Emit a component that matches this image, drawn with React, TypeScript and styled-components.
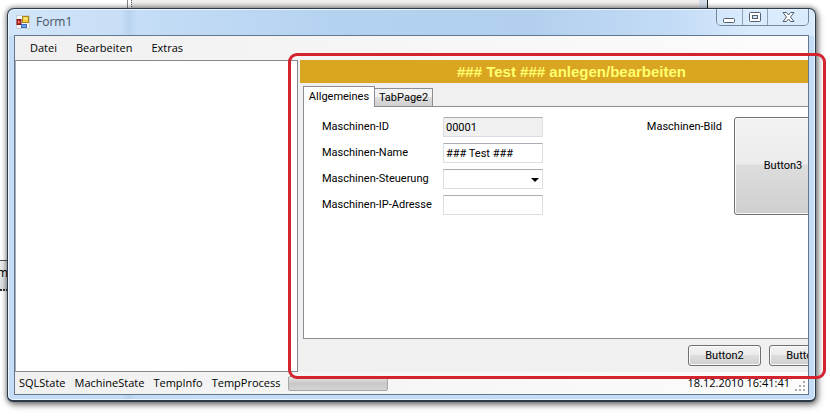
import React, { useState } from "react";
import styled, { createGlobalStyle } from "styled-components";

const shellFont = `"Open Sans", "Noto Sans", sans-serif`;
const formFont = `Roboto, "Liberation Sans", Arial, sans-serif`;

const GlobalStyle = createGlobalStyle`
  *, *::before, *::after { box-sizing: border-box; }
  body { margin: 0; background: #fff; color: #000; overflow: hidden; }
  button, input, select { margin: 0; font: inherit; color: inherit; }
`;

const Desktop = styled.div`
  position: relative;
  display: flex;
  min-height: 100vh;
  padding: 8px 14px 15px 7px;
`;

const BackWindow = styled.div`
  position: absolute;
  top: 0;
  left: 131px;
  right: 125px;
  height: 9px;
  background: linear-gradient(#f4f2f1, #dddbd9);
  border-left: 1px dotted #555;
  border-right: 1px dotted #555;
  box-shadow: -3px 0 0 #fff, -4px 0 0 #888;
`;

const BackEdge = styled.div`
  position: absolute;
  top: 0;
  right: 122px;
  width: 9px;
  height: 9px;
  background: #d4dee8;
  border-right: 1px solid #222;
`;

const BackLabel = styled.div`
  position: absolute;
  top: 260px;
  left: 0;
  width: 8px;
  height: 31px;
  overflow: hidden;
  border-top: 1px solid #555;
  border-bottom: 2px dotted #333;
  background: linear-gradient(#eee, #d9dde0);
  font: 12px/24px ${shellFont};
  text-indent: -3px;
`;

const Window = styled.main`
  position: relative;
  flex: 1;
  min-width: 0;
  display: flex;
  flex-direction: column;
  padding: 0 6px 5px 6px;
  border: 1px solid #2c3a4a;
  border-bottom-width: 2px;
  border-radius: 7px 7px 6px 6px;
  background:
    linear-gradient(90deg, transparent 0 113px, #9fbfe055 121px, transparent 129px),
    linear-gradient(90deg, #d3e6f9 0, #c2dbf5 20%, #b3d2f0 42%, #b2d0ee 65%, #c4dcf6 83%, #d8eafc 92%) top / 100% 27px no-repeat,
    #c4dcf5;
  box-shadow:
    inset 0 0 0 1px #eaf5ff,
    0 0 5px 1px #0006,
    2px 3px 7px 0 #0006;
`;

const TitleBar = styled.header`
  display: flex;
  align-items: center;
  height: 26px;
  padding-left: 2px;
  font: 12px/18px ${shellFont};
  color: #46525f;
`;

const Title = styled.h1`
  margin: 0 auto 0 6px;
  font: inherit;
`;

const Controls = styled.div`
  display: flex;
  align-self: flex-start;
  height: 17px;
  border: 1px solid #75879a;
  border-top: 0;
  border-radius: 0 0 5px 5px;
`;

const ControlButton = styled.button<{ $wide?: boolean }>`
  display: grid;
  place-items: center;
  width: ${(p) => (p.$wide ? 41 : 25)}px;
  padding: 0;
  border: 0;
  background: #e2f0ff44;
  & + & { border-left: 1px solid #8fa3b8; }
`;

const Client = styled.div`
  flex: 1;
  min-height: 0;
  display: flex;
  flex-direction: column;
  border: 1px solid #65778c;
  background: #f0f0f0;
  overflow: hidden;
`;

const MenuBar = styled.nav`
  display: flex;
  height: 24px;
  padding-left: 9px;
  background: linear-gradient(90deg, #f0f0f0, #fcfcfc);
  font: 11px/24px ${shellFont};
`;

const MenuItem = styled.button`
  padding: 0 6px;
  margin-right: 7px;
  border: 0;
  background: none;
`;

const Split = styled.div`
  flex: 1;
  min-height: 0;
  display: grid;
  grid-template-columns: 283px minmax(0, 1fr);
  gap: 2px;
`;

const ListPane = styled.section`
  border: 1px solid #828790;
  border-left-color: #a5adb8;
  background: #fff;
`;

const Editor = styled.section`
  display: flex;
  flex-direction: column;
  width: calc(100% + 35px);
  font: 11px/16px ${formFont};
`;

const Banner = styled.h2`
  height: 23px;
  margin: 0 0 3px;
  background: #daa520;
  color: #ffff70;
  font: bold 15px/23px "Liberation Sans", Arial, sans-serif;
  text-align: center;
`;

const TabStrip = styled.div`
  display: flex;
  height: 20px;
  margin: 0 3px;
`;

const Tab = styled.button<{ $active: boolean }>`
  position: relative;
  z-index: ${(p) => (p.$active ? 1 : 0)};
  height: ${(p) => (p.$active ? 21 : 18)}px;
  align-self: ${(p) => (p.$active ? "flex-start" : "flex-end")};
  padding: 0;
  width: ${(p) => (p.$active ? 72 : 58)}px;
  border: 1px solid #8c8e94;
  border-bottom: 0;
  background: ${(p) => (p.$active ? "#fff" : "linear-gradient(#f2f2f2 45%, #dedede 50%, #d0d0d0)")};
  white-space: nowrap;
  & + & { border-left: 0; }
`;

const TabPanel = styled.div`
  flex: 1;
  display: flex;
  align-items: flex-start;
  margin: 0 3px;
  padding: 10px 7px 0 18px;
  border: 1px solid #8c8e94;
  background: #fff;
`;

const Fields = styled.form`
  display: grid;
  grid-template-columns: 121px 100px;
  grid-auto-rows: 20px;
  row-gap: 6px;
  align-items: center;
`;

const TextBox = styled.input`
  width: 100%;
  height: 20px;
  padding: 0 2px;
  border: 1px solid #dadde2;
  border-top-color: #abadb3;
  border-radius: 1px;
  background: #fff;
  &:read-only { background: #f0f0f0; }
`;

const SelectWrap = styled.div`
  position: relative;
  height: 20px;
  svg { position: absolute; right: 4px; top: 9px; pointer-events: none; }
`;

const Select = styled.select`
  appearance: none;
  width: 100%;
  height: 20px;
  padding: 0 16px 0 2px;
  border: 1px solid #dadde2;
  border-top-color: #abadb3;
  border-radius: 1px;
  background: #fff;
`;

const Picture = styled.div`
  display: flex;
  margin-left: auto;
  gap: 12px;
  line-height: 20px;
`;

const PushButton = styled.button<{ $large?: boolean }>`
  width: ${(p) => (p.$large ? 98 : 73)}px;
  height: ${(p) => (p.$large ? 98 : 21)}px;
  padding: 0;
  border: 1px solid #707070;
  border-radius: 3px;
  background: linear-gradient(#f2f2f2, #ebebeb 48%, #dddddd 49%, #cfcfcf);
  box-shadow: inset 0 0 0 1px #fafafa;
`;

const Footer = styled.footer`
  display: flex;
  justify-content: flex-end;
  gap: 8px;
  padding: 6px 1px;
`;

const StatusBar = styled.div`
  display: flex;
  align-items: center;
  gap: 9px;
  height: 22px;
  padding: 0 2px 0 4px;
  background: linear-gradient(90deg, #f0f0f0, #fcfcfc);
  font: 11px/20px ${shellFont};
`;

const Progress = styled.div`
  width: 100px;
  height: 15px;
  margin-left: -2px;
  border: 1px solid #a6a6a6;
  border-radius: 2px;
  background: linear-gradient(#e6e6e6, #c8c8c8 50%, #d4d4d4);
`;

const Clock = styled.time`
  margin-left: auto;
`;

const Highlight = styled.div`
  position: absolute;
  z-index: 2;
  top: 53px;
  bottom: 38px;
  left: 288px;
  right: 4px;
  border: 3px solid #d2232f;
  border-radius: 9px;
  pointer-events: none;
`;

const AppIcon = () => (
  <svg width="14" height="14" viewBox="0 0 14 14" aria-hidden="true">
    <path d="M.5.5h13v13H.5z" fill="#f3f5f8" stroke="#c8ced6" />
    <rect x="6.5" y="1.5" width="6" height="6" fill="#f5ca35" stroke="#a88722" />
    <path d="M7.5 2.5h4v2h-4z" fill="#ffe98a" />
    <rect x="1" y="4.5" width="4" height="5" fill="#c52b24" stroke="#7d1713" />
    <path d="M2 6h1.500v2H2z" fill="#f08a80" />
    <rect x="5.500" y="9.500" width="5" height="3" fill="#6fa3ee" stroke="#3d6dbd" />
  </svg>
);

const MinimizeIcon = () => (
  <svg width="13" height="13" viewBox="0 0 13 13" aria-hidden="true">
    <rect x=".5" y="7.500" width="11" height="4" rx="1" fill="#fff" stroke="#525f6e" />
  </svg>
);

const MaximizeIcon = () => (
  <svg width="13" height="13" viewBox="0 0 13 13" aria-hidden="true">
    <rect x=".5" y="1.500" width="11" height="9" rx="1" fill="#fff" stroke="#525f6e" />
    <rect x="3.500" y="4.500" width="5" height="3" fill="#d4e4f4" stroke="#525f6e" />
  </svg>
);

const CloseIcon = () => (
  <svg width="13" height="12" viewBox="0 0 13 12" aria-hidden="true">
    <path
      d="M1 1.500h3.500l2 2.500 2-2.500H12L8.500 6l3.500 4.500H8.500l-2-2.500-2 2.500H1L4.500 6z"
      fill="#fff"
      stroke="#525f6e"
      strokeLinejoin="round"
    />
  </svg>
);

const Grip = styled.svg`
  margin-left: -4px;
  align-self: flex-end;
  margin-bottom: 2px;
`;

const gripDots = [[8, 0], [4, 4], [8, 4], [0, 8], [4, 8], [8, 8]];
const tabs = ["Allgemeines", "TabPage2"];
const states = ["SQLState", "MachineState", "TempInfo", "TempProcess"];

export default function App() {
  const [name, setName] = useState("### Test ###");
  const [address, setAddress] = useState("");

  return (
    <Desktop>
      <GlobalStyle />
      <BackWindow />
      <BackEdge />
      <BackLabel>m</BackLabel>
      <Window>
        <TitleBar>
          <AppIcon />
          <Title>Form1</Title>
          <Controls>
            <ControlButton aria-label="Minimieren"><MinimizeIcon /></ControlButton>
            <ControlButton aria-label="Maximieren"><MaximizeIcon /></ControlButton>
            <ControlButton aria-label="Schließen" $wide><CloseIcon /></ControlButton>
          </Controls>
        </TitleBar>
        <Client>
          <MenuBar>
            <MenuItem>Datei</MenuItem>
            <MenuItem>Bearbeiten</MenuItem>
            <MenuItem>Extras</MenuItem>
          </MenuBar>
          <Split>
            <ListPane />
            <Editor>
              <Banner>### Test ### anlegen/bearbeiten</Banner>
              <TabStrip role="tablist">
                {tabs.map((t, i) => (
                  <Tab key={t} role="tab" aria-selected={i === 0} $active={i === 0}>{t}</Tab>
                ))}
              </TabStrip>
              <TabPanel role="tabpanel">
                <Fields>
                  <label htmlFor="id">Maschinen-ID</label>
                  <TextBox id="id" value="00001" readOnly />
                  <label htmlFor="name">Maschinen-Name</label>
                  <TextBox id="name" value={name} onChange={(e) => setName(e.target.value)} />
                  <label htmlFor="control">Maschinen-Steuerung</label>
                  <SelectWrap>
                    <Select id="control"><option value="" /></Select>
                    <svg width="8" height="4" viewBox="0 0 8 4" aria-hidden="true">
                      <path d="M0 0h8L4 4z" />
                    </svg>
                  </SelectWrap>
                  <label htmlFor="ip">Maschinen-IP-Adresse</label>
                  <TextBox id="ip" value={address} onChange={(e) => setAddress(e.target.value)} />
                </Fields>
                <Picture>
                  <label htmlFor="picture">Maschinen-Bild</label>
                  <PushButton id="picture" $large>Button3</PushButton>
                </Picture>
              </TabPanel>
              <Footer>
                <PushButton>Button2</PushButton>
                <PushButton>Button1</PushButton>
              </Footer>
            </Editor>
          </Split>
          <StatusBar>
            {states.map((s) => <span key={s}>{s}</span>)}
            <Progress role="progressbar" aria-label="TempProcess" />
            <Clock>18.12.2010 16:41:41</Clock>
            <Grip width="11" height="11" viewBox="0 0 11 11" aria-hidden="true">
              {gripDots.map(([x, y]) => (
                <rect key={`${x}-${y}`} x={x} y={y} width="2" height="2" fill="#aaa" />
              ))}
            </Grip>
          </StatusBar>
        </Client>
      </Window>
      <Highlight />
    </Desktop>
  );
}
